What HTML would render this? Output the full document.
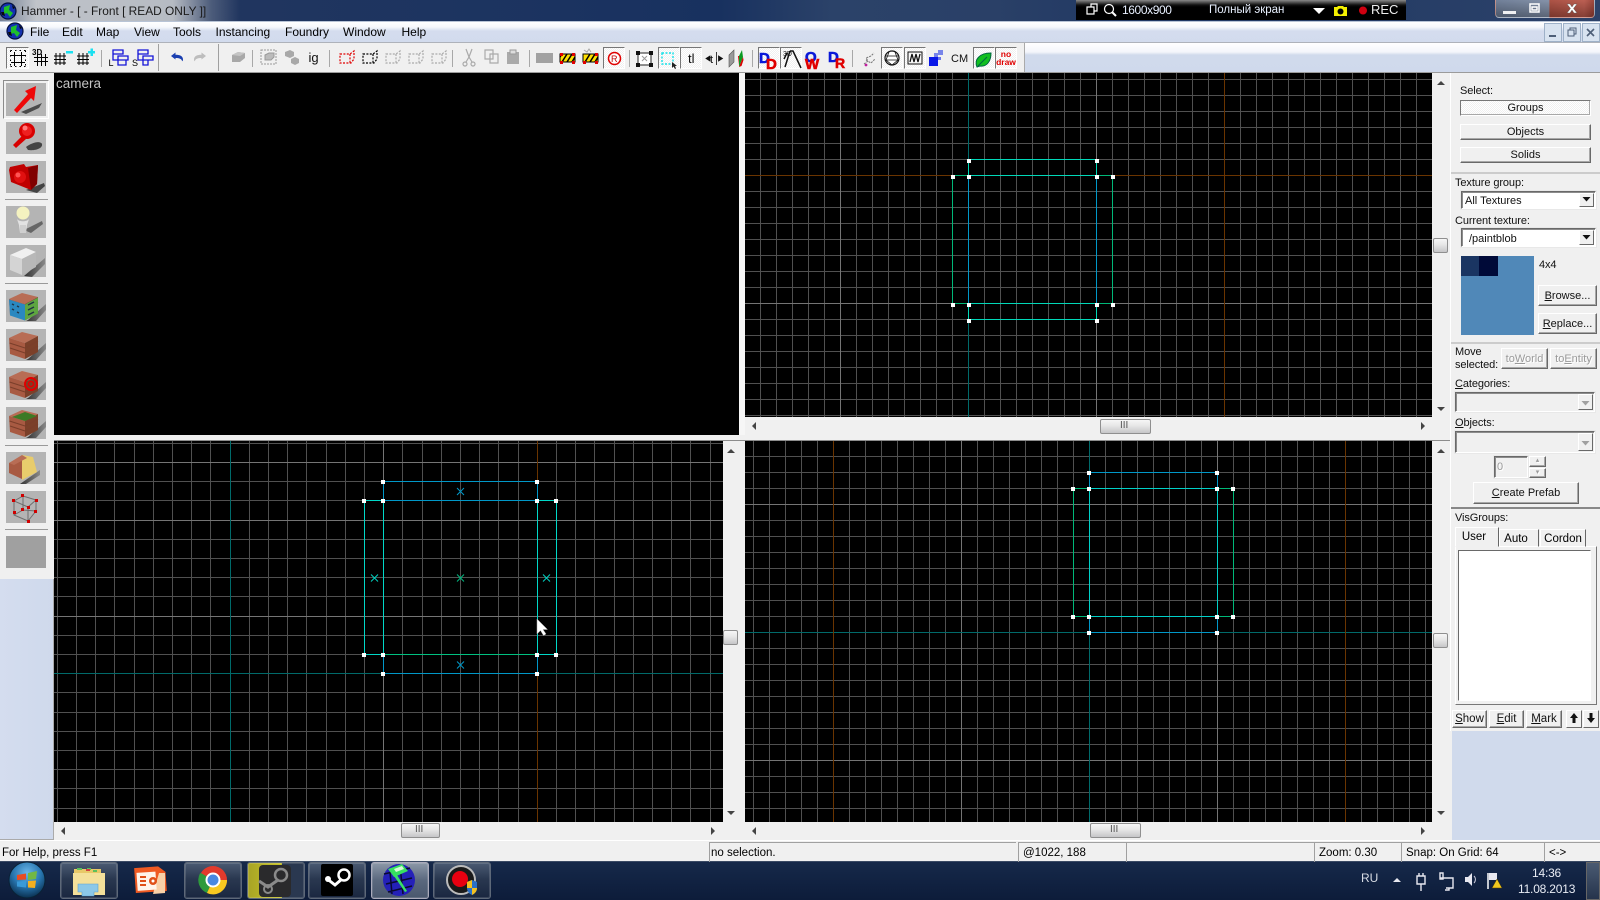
<!DOCTYPE html>
<html><head><meta charset="utf-8"><title>Hammer</title>
<style>
html,body{margin:0;padding:0;width:1600px;height:900px;overflow:hidden;background:#f0f0f0}
body{position:relative;font:12px/14px "Liberation Sans",sans-serif;color:#000}
.a,.t,.b,.s,.th{position:absolute;box-sizing:border-box}
.t{white-space:nowrap}
.p{font-size:11px;letter-spacing:-.1px;color:#111}
.b{background:#f0f0f0;border:1px solid;border-color:#fff #696969 #696969 #fff;box-shadow:inset -1px -1px #a8a8a8;text-align:center;font-size:11px;white-space:nowrap;color:#111}
.s{background:#fff;border:1px solid;border-color:#696969 #fff #fff #696969;box-shadow:inset 1px 1px #8c8c8c,0 0 0 1px #e8e8e8;font-size:11px;color:#111}
.dis{background:#f0f0f0}
.gr{color:#9a9a9a;text-shadow:1px 1px #fff}
.th{background:linear-gradient(#f6f6f6,#e6e6e6 45%,#c6c6c8);border:1px solid #8f8f8f;border-radius:2px}
.pr{background:repeating-conic-gradient(#fff 0 25%,#f0f0f0 0 50%) 0 0/2px 2px;border:1px solid;border-color:#777 #fff #fff #777}
.st{position:absolute;top:842px;height:19px;border-left:1px solid #a0a0a0;border-top:1px solid #a0a0a0;font-size:11.5px;line-height:20px;padding-left:4px;white-space:nowrap}
.tb{position:absolute;top:862px;height:37px;width:58px;box-sizing:border-box;border:1px solid #5d6878;border-radius:3px;background:linear-gradient(#4a5a72,#2a3850 45%,#1a2740);box-shadow:inset 0 0 0 1px rgba(255,255,255,.14)}
</style></head><body>

<!-- title bar -->
<div class="a" style="left:0;top:0;width:1600px;height:21px;background:linear-gradient(90deg,#24375e 0,#1b3360 35%,#18315f 45%,#2b4269 52%,#2a4067 62%,#1f3763 72%,#2c4269 100%)"></div>
<div class="a" style="left:0;top:0;width:240px;height:21px;background:linear-gradient(90deg,rgba(150,158,172,.7),rgba(200,203,207,.95) 15%,rgba(190,194,200,.95) 72%,rgba(120,130,150,.5) 88%,rgba(30,50,90,0))"></div>
<div class="t" style="left:21px;top:4px;color:#1a1a1a;font-size:11.9px">Hammer - [ - Front [ READ ONLY ]]</div>
<div class="a" style="left:1076px;top:0;width:330px;height:20px;background:linear-gradient(#8a8a8a,#111 25%,#000 35%)"></div>
<div class="t" style="left:1122px;top:3px;color:#e8f0ff;font-size:12px;letter-spacing:-.4px">1600x900</div>
<div class="t" style="left:1209px;top:3px;color:#e8f0ff;font-size:11.5px">Полный экран</div>
<div class="t" style="left:1371px;top:3px;color:#eee;font-size:13px">REC</div>
<div class="a" style="left:1495px;top:0;width:100px;height:18px;border:1px solid rgba(255,255,255,.4);border-top:0;border-radius:0 0 4px 4px;background:linear-gradient(rgba(255,255,255,.05),rgba(0,0,0,.28)),linear-gradient(90deg,#6a7a94 0,#7f8da5 54%,#a84a3c 55%,#b8574a 90%,#983f34);box-sizing:border-box"></div>

<!-- menu bar -->
<div class="a" style="left:0;top:22px;width:1600px;height:20px;background:linear-gradient(#fff,#f6f8fc 25%,#d4dcee 45%,#d2dbed)"></div>
<div class="a" style="left:0;top:21px;width:1600px;height:1px;background:#b8c4d6"></div>
<div class="a" style="left:0;top:42px;width:1600px;height:1px;background:#aeb2ba"></div>
<div class="t" style="left:30px;top:25px">File</div>
<div class="t" style="left:62px;top:25px">Edit</div>
<div class="t" style="left:96px;top:25px">Map</div>
<div class="t" style="left:134px;top:25px">View</div>
<div class="t" style="left:173px;top:25px">Tools</div>
<div class="t" style="left:215.5px;top:25px">Instancing</div>
<div class="t" style="left:285px;top:25px">Foundry</div>
<div class="t" style="left:343px;top:25px">Window</div>
<div class="t" style="left:401.5px;top:25px">Help</div>

<!-- toolbar strip -->
<div class="a" style="left:0;top:43px;width:1600px;height:30px;background:linear-gradient(#fff,#f4f6fb 30%,#d0daec 40%,#cfd9ec)"></div>
<div class="a" style="left:0;top:43px;width:1024px;height:30px;background:#f0f0f0;border-right:1px solid #aaa;box-sizing:content-box;"></div>
<div class="a" style="left:0;top:72px;width:1600px;height:1px;background:#9b9b9b"></div>

<!-- pressed toolbar buttons -->
<div class="a pr" style="left:6px;top:47px;width:23px;height:22px"></div>
<div class="a pr" style="left:603px;top:47px;width:22px;height:22px"></div>
<div class="a pr" style="left:658px;top:47px;width:22px;height:22px"></div>
<div class="a pr" style="left:680px;top:47px;width:22px;height:22px"></div>
<div class="a pr" style="left:758px;top:47px;width:22px;height:22px"></div>
<div class="a pr" style="left:780px;top:47px;width:22px;height:22px"></div>
<div class="a pr" style="left:881px;top:47px;width:22px;height:22px"></div>
<div class="a pr" style="left:904px;top:47px;width:22px;height:22px"></div>
<div class="a pr" style="left:973px;top:47px;width:22px;height:22px"></div>
<div class="a pr" style="left:995px;top:47px;width:22px;height:22px"></div>

<!-- left bar -->
<div class="a" style="left:0;top:73px;width:54px;height:506px;background:#f0f0f0"></div>
<div class="a" style="left:0;top:579px;width:54px;height:262px;background:linear-gradient(90deg,#d4ddef,#cfd9ec);border-right:1px solid #aaa;border-bottom:2px solid #aaa;box-sizing:border-box"></div>
<div class="a" style="left:3px;top:80px;width:46px;height:39px;border:1px solid;border-color:#8c8c8c #fff #fff #8c8c8c;box-sizing:border-box"></div>

<!-- right panel backdrop -->
<div class="a" style="left:1450px;top:73px;width:150px;height:658px;background:#f0f0f0;border-left:1px solid #fff"></div>
<div class="a" style="left:1452px;top:731px;width:148px;height:110px;background:#d0daec"></div>

<!-- viewports -->
<div class="a" style="left:54px;top:73px;width:685px;height:362px;background:#000"></div>
<div class="a" style="left:54px;top:440px;width:1396px;height:1px;background:#8c8c8c"></div>

<svg class="a" style="left:0;top:0" width="1600" height="900" viewBox="0 0 1600 900" xmlns="http://www.w3.org/2000/svg">
<defs>
<pattern id="g16a" patternUnits="userSpaceOnUse" x="968" y="175" width="16" height="16"><rect width="1" height="16" fill="#505050"/><rect width="16" height="1" fill="#505050"/></pattern>
<pattern id="g16b" patternUnits="userSpaceOnUse" x="1089" y="472" width="16" height="16"><rect width="1" height="16" fill="#505050"/><rect width="16" height="1" fill="#505050"/></pattern>
<pattern id="g19" patternUnits="userSpaceOnUse" x="76" y="462" width="96" height="96" shape-rendering="crispEdges">
<path d="M0 0h1v96H0zM19 0h1v96h-1zM38 0h1v96h-1zM58 0h1v96h-1zM77 0h1v96h-1zM0 0h96v1H0zM0 19h96v1H0zM0 38h96v1H0zM0 58h96v1H0zM0 77h96v1H0z" fill="#505050"/></pattern>
<linearGradient id="rd" x1="0" y1="0" x2="1" y2="1"><stop offset="0" stop-color="#ff3030"/><stop offset="1" stop-color="#900000"/></linearGradient>
<linearGradient id="sh" x1="0" y1="0" x2="1" y2="0"><stop offset="0" stop-color="#333"/><stop offset="1" stop-color="#888"/></linearGradient>
<g id="cube">
<path d="M22 30 40 14v6L30 31H20z" fill="url(#sh)"/>
<path d="M3 9 16 3l16 4-13 7z" fill="#b86d55"/>
<path d="M3 9l16 5v16L4 25z" fill="#a85a42"/>
<path d="M19 14l13-7v16l-13 7z" fill="#7b4029"/>
<path d="M3.5 14l15.5 5M4 19l15 5M19 19l13-7M19 24l13-7" stroke="#7a3e2a" stroke-width="1" fill="none"/>
</g>
<g id="globe"><circle r="8" fill="#1432b0"/><circle r="8" fill="none" stroke="#041040" stroke-width="1.2"/><path d="M-4-4 2-6 1-1 5 2 2 6-1 2-4 3z" fill="#1fc02a"/><path d="M-7 1-4 1-3 5-6 4zM4-6 7-3 5-2z" fill="#0a0a0a"/></g>
<linearGradient id="tbg" x1="0" y1="0" x2="0" y2="1"><stop offset="0" stop-color="#16294a"/><stop offset="1" stop-color="#0d1c3a"/></linearGradient>
<radialGradient id="orb" cx=".5" cy=".3" r=".7"><stop offset="0" stop-color="#6ab6e8"/><stop offset=".55" stop-color="#2876b0"/><stop offset="1" stop-color="#0a3050"/></radialGradient>
</defs>

<!-- grids -->
<rect x="745" y="73" width="687" height="344" fill="#000"/>
<rect x="745" y="441" width="687" height="381" fill="#000"/>
<rect x="54" y="441" width="669" height="381" fill="#000"/>
<g shape-rendering="crispEdges">
<rect x="745" y="73" width="687" height="344" fill="url(#g16a)"/>
<rect x="745" y="441" width="687" height="381" fill="url(#g16b)"/>
<rect x="54" y="441" width="669" height="381" fill="url(#g19)"/>
<path d="M840.5 73V417M1096.5 73V417M745 303.5H1432" stroke="#747474" fill="none"/>
<path d="M968.5 73V417" stroke="#006a6a" fill="none"/>
<path d="M1224.5 73V417M745 175.5H1432" stroke="#6a3400" fill="none"/>
<path d="M961.5 441V822M1217.5 441V822M745 504.5H1432M745 760.5H1432" stroke="#747474" fill="none"/>
<path d="M1089.5 441V822M745 632.5H1432" stroke="#006a6a" fill="none"/>
<path d="M833.5 441V822M1345.5 441V822" stroke="#6a3400" fill="none"/>
<path d="M383.5 441V822M54 462.5H723M54 520.5H723M54 616.5H723" stroke="#747474" fill="none"/>
<path d="M230.5 441V822M54 673.5H723" stroke="#006a6a" fill="none"/>
<path d="M537.5 441V822" stroke="#6a3400" fill="none"/>

<g fill="none">
<path d="M952.5 175.5V303.5M1112.5 175.5V303.5M952.5 175.5H968.5M1096.5 175.5H1112.5M952.5 303.5H968.5M1096.5 303.5H1112.5" stroke="#00b878"/>
<path d="M968.5 175.5V303.5M1096.5 175.5V303.5" stroke="#0098c8"/>
<path d="M968.5 159.5H1096.5M968.5 175.5H1096.5M968.5 303.5H1096.5M968.5 319.5H1096.5M968.5 159.5V175.5M1096.5 159.5V175.5M968.5 303.5V319.5M1096.5 303.5V319.5" stroke="#00d8b8"/>
</g>
<path fill="#fff" d="M967 159h4v4h-4zM1095 159h4v4h-4zM951 175h4v4h-4zM967 175h4v4h-4zM1095 175h4v4h-4zM1111 175h4v4h-4zM951 303h4v4h-4zM967 303h4v4h-4zM1095 303h4v4h-4zM1111 303h4v4h-4zM967 319h4v4h-4zM1095 319h4v4h-4z"/>

<g fill="none">
<path d="M1073.5 488.5V616.5M1233.5 488.5V616.5M1073.5 488.5H1089.5M1217.5 488.5H1233.5M1073.5 616.5H1089.5M1217.5 616.5H1233.5" stroke="#00b878"/>
<path d="M1089.5 472.5H1217.5M1089.5 632.5H1217.5M1089.5 472.5V488.5M1217.5 472.5V488.5M1089.5 616.5V632.5M1217.5 616.5V632.5" stroke="#0098c8"/>
<path d="M1089.5 488.5H1217.5M1089.5 616.5H1217.5M1089.5 488.5V616.5M1217.5 488.5V616.5" stroke="#00d0c8"/>
</g>
<path fill="#fff" d="M1087 471h4v4h-4zM1215 471h4v4h-4zM1071 487h4v4h-4zM1087 487h4v4h-4zM1215 487h4v4h-4zM1231 487h4v4h-4zM1071 615h4v4h-4zM1087 615h4v4h-4zM1215 615h4v4h-4zM1231 615h4v4h-4zM1087 631h4v4h-4zM1215 631h4v4h-4z"/>

<g fill="none">
<path d="M383.5 481.5H537.5M383.5 500.5H537.5M383.5 673.5H537.5M383.5 481.5V500.5M537.5 481.5V500.5M383.5 654.5V673.5M537.5 654.5V673.5" stroke="#0098c8"/>
<path d="M364.5 500.5V654.5M556.5 500.5V654.5M383.5 500.5V654.5M537.5 500.5V654.5M364.5 500.5H383.5M537.5 500.5H556.5M364.5 654.5H383.5M537.5 654.5H556.5" stroke="#00d8c8"/>
<path d="M383.5 654.5H537.5" stroke="#00c080"/>
</g>
<path fill="#fff" d="M381 480h4v4h-4zM535 480h4v4h-4zM362 499h4v4h-4zM381 499h4v4h-4zM535 499h4v4h-4zM554 499h4v4h-4zM362 653h4v4h-4zM381 653h4v4h-4zM535 653h4v4h-4zM554 653h4v4h-4zM381 672h4v4h-4zM535 672h4v4h-4z"/>
</g>
<g fill="none" stroke-width="1">
<path d="M457 488l7 7m0-7l-7 7M457 661.5l7 7m0-7l-7 7" stroke="#0098c8"/>
<path d="M371 574.5l7 7m0-7l-7 7M543 574.5l7 7m0-7l-7 7" stroke="#00d0c0"/>
<path d="M457 574.5l7 7m0-7l-7 7" stroke="#00b880"/>
</g>
<path d="M537 619v15l3.5-3.5 3 5 2.5-1.5-3-4.5h4.5z" fill="#fff" stroke="#aaa" stroke-width=".5"/>

<!-- scroll arrows -->
<g fill="#444">
<path d="M1437 85l4-4 4 4zM1437 407l4 4 4-4zM1437 453l4-4 4 4zM1437 811l4 4 4-4zM727 453l4-4 4 4zM727 811l4 4 4-4z"/>
<path d="M756 422l-4 4 4 4zM1421 422l4 4-4 4zM756 827l-4 4 4 4zM1421 827l4 4-4 4zM65 827l-4 4 4 4zM711 827l4 4-4 4z"/>
</g>

<path d="M1451 173h149M1451 343h149" stroke="#a8a8a8" fill="none"/>
<path d="M1451 508h149" stroke="#888" stroke-width="2" fill="none"/>

<use href="#globe" transform="translate(8 11)"/>
<use href="#globe" transform="translate(15 31)"/>

<g fill="none" stroke="#fff" stroke-width="1.2">
<path d="M1087 7h7v7h-7zM1091 7V4h6v7h-3"/>
<circle cx="1109" cy="9" r="4.5"/><path d="M1112 12l4 4" stroke-width="2"/>
</g>
<path d="M1313 8h12l-6 6z" fill="#fff"/>
<path d="M1334 7h3l1-1h5l1 1h3v9h-13z" fill="#f4f000"/><circle cx="1340.5" cy="11.5" r="3" fill="#000"/>
<circle cx="1363" cy="10.5" r="4" fill="#d00010"/>
<path d="M1503 11h13v3h-13z" fill="#fff" opacity=".9"/>
<path d="M1530 4h9v8h-9zM1532 7h5v3h-5z" fill="none" stroke="#fff" stroke-width="1.5"/>
<path d="M1567 4l3 0 2 3 2-3 3 0-3.5 4.5 3.5 4.5-3 0-2-3-2 3-3 0 3.5-4.5z" fill="#fff" stroke="#555" stroke-width=".4"/>
<g fill="#d8e3f0" stroke="#9eb1c8"><rect x="1544.5" y="23.5" width="17" height="18"/><rect x="1563.5" y="23.5" width="17" height="18"/><rect x="1582.5" y="23.5" width="17" height="18"/></g>
<g fill="none" stroke="#4e5f78"><path d="M1549 36h7" stroke-width="2"/><path d="M1568 30h6v6h-6zM1570 30v-2h6v6h-2"/><path d="M1587 29l7 7m0-7l-7 7" stroke-width="1.6"/></g>

<g stroke="#a8a8a8" fill="none">
<path d="M101.5 50V67M252.5 50V67M329.5 50V67M452.5 50V67M529.5 50V67M629.5 50V67M752.5 50V67M852.5 50V67"/>
<path d="M158.5 44V71M218.5 44V71" stroke="#a0a0a0"/>
</g>

<!-- toolbar icons -->
<g fill="none" stroke="#000" stroke-width="1">
<path d="M14.5 52V66M21.5 52V66M11 55.5H25M11 62.5H25"/>
<path d="M10.5 50.5v16M25.5 50.5v16M10.5 50.5h15M10.5 66.5h15" stroke-dasharray="1.500 3"/>
<path d="M37.5 54V66M41.500 54V66M45.5 54V66M34 57.5H48M34 61.5H48"/>
<path d="M56 53V65M60 53V65M64 53V65M54 56H66M54 59.5H66M54 63H66"/>
<path d="M79 53V65M83 53V65M87 53V65M77 56H89M77 59.5H89M77 63H89"/>
</g>
<text x="32" y="55" font-family="Liberation Sans" font-weight="bold" font-size="8" fill="#000">3D</text>
<path d="M66 51h7v2.5h-7zM88 51h7v2.5h-7zM90.5 48.5H93V56h-2.5z" fill="#1be0f0"/>
<g fill="none" stroke="#1414d8" stroke-width="1.3">
<path d="M113 50h10v4h-10zM113 54v6h5M118 56h10v4h-10zM118 60v5h8v-5"/>
<path d="M138 50h10v4h-10zM138 54v6h5M143 56h10v4h-10zM143 60h5v5h-5z"/>
</g>
<text x="108.500" y="66" font-family="Liberation Sans" font-size="9" fill="#000">L</text>
<text x="132" y="66" font-family="Liberation Sans" font-size="9" fill="#000">S</text>
<path d="M171 56l4.500-3.500v2.200c4 0 7.500 1 7.500 4.800 0 1-.3 1.500-.8 1.800-.5-2.500-3-3.300-6.700-3.300v1.500z" fill="#1a3fb0"/>
<path d="M206 56l-4.500-3.500v2.200c-4 0-7.500 1-7.500 4.800 0 1 .3 1.500.8 1.800.5-2.500 3-3.300 6.700-3.300v1.500z" fill="#bdbdbd"/>
<path d="M232 55l6-3 7 1v5l-5 4h-8z" fill="#a8a8a8"/><path d="M238 52l7 1-5 3-8-1z" fill="#c4c4c4"/>
<g stroke="#9a9a9a" fill="#bbb">
<path d="M261 50h15v14h-15z" fill="none" stroke-dasharray="2 1"/><path d="M265 55l4-2h5v4l-3 3h-6z"/>
<path d="M285 52l5-2 4 2v4l-4 2-5-2zM291 59l4-2 4 2v4l-4 2-4-2z" stroke="none" fill="#a8a8a8"/>
</g>
<text x="308.5" y="62" font-family="Liberation Sans" font-size="13" fill="#111">ig</text>
<g fill="none" stroke-dasharray="2 1.4" stroke-width="1.2">
<path d="M340 54h10l4-3v8l-3 4h-11zM350 54v9" stroke="#e00000"/>
<path d="M363 54h10l4-3v8l-3 4h-11zM373 54v9" stroke="#000"/>
<path d="M386 54h10l4-3v8l-3 4h-11zM396 54v9" stroke="#aaa"/>
<path d="M409 54h10l4-3v8l-3 4h-11zM419 54v9" stroke="#aaa"/>
<path d="M432 54h10l4-3v8l-3 4h-11zM442 54v9" stroke="#aaa"/>
</g>
<g fill="none" stroke="#aaa" stroke-width="1.2">
<path d="M466 49l3 8 3-8M469 57l-3 5M469 57l3 5"/><circle cx="465" cy="64" r="2"/><circle cx="473" cy="64" r="2"/>
<path d="M485 50h8v9h-8zM490 54h8v9h-8z"/>
</g>
<path d="M507 52h12v12h-12z" fill="#aaa"/><path d="M510 50h6v4h-6z" fill="#ddd" stroke="#999"/>
<rect x="536" y="53" width="17" height="10" fill="#a2a2a2"/>
<g>
<rect x="560" y="54" width="15" height="8" fill="#ffe000" stroke="#000"/><path d="M562 54l-2 3M567 54l-5 8M572 54l-5 8M575 57l-3 5" stroke="#000" stroke-width="1.5"/>
<path d="M560 53h3v3h-3zM572 53h3v3h-3zM560 61h3v3h-3zM572 61h3v3h-3z" fill="#e00000"/>
<rect x="583" y="54" width="15" height="8" fill="#ffe000" stroke="#000"/><path d="M590 54l-5 8M595 54l-5 8M598 57l-3 5" stroke="#000" stroke-width="1.5"/>
<path d="M583 61h3v3h-3zM595 61h3v3h-3zM595 53h3v3h-3z" fill="#e00000"/><path d="M584 50l3 2 2-3 2 3" stroke="#aaa" fill="none"/>
</g>
<circle cx="614.5" cy="58.500" r="6" fill="#fff" stroke="#e00000" stroke-width="1.500"/>
<text x="611" y="62" font-family="Liberation Sans" font-size="9" fill="#c00000">R</text>
<path d="M638 53h13v12h-13z" fill="#fff" stroke="#222"/><path d="M636 51h4v4h-4zM649 51h4v4h-4zM636 63h4v4h-4zM649 63h4v4h-4z" fill="#111"/><path d="M642 56l5 5m0-5l-5 5" stroke="#999" fill="none"/>
<path d="M662 53h11v11h-11z" fill="none" stroke="#12e0e8" stroke-width="1.4" stroke-dasharray="2 1.500"/><path d="M672 62v6l1.500-1.500 1.500 2.500 1-.5-1-2.500h2z" fill="#222"/>
<text x="688" y="63" font-family="Liberation Sans" font-size="13" fill="#111">tl</text>
<text x="710" y="63" font-family="Liberation Sans" font-size="11" fill="#111">t</text>
<path d="M706 58.500l4-2.500v5zM716.500 52v13M722.500 58.500l-4-2.500v5z" stroke="#111" fill="#111" stroke-width=".8"/>
<path d="M729 55l5-5v12l-5 5z" fill="#9a9a9a" stroke="#555" stroke-width=".6"/>
<path d="M739 56l3-6 1 7-4 10z" fill="#0a9a20"/><path d="M739 67l4-10 .5 3-2 6zM738 56l1 0 0 9z" fill="#d80000"/>
<g font-family="Liberation Sans" font-weight="bold" stroke-width=".6">
<text x="759" y="63" font-size="15" fill="#0a18d8" stroke="#0a18d8">D</text>
<text x="766" y="69" font-size="15" fill="#e00000" stroke="#e00000">D</text>
<path d="M787 53l-3 6M790 51h3l8 17M790 51l-5 16" fill="none" stroke="#111" stroke-width="1.500"/>
<text x="783" y="56" font-size="7" font-weight="normal" fill="#111">3D</text>
<text x="805" y="62" font-size="15" fill="#0a18d8" stroke="#0a18d8">O</text>
<text x="805" y="69" font-size="15" fill="#e00000" stroke="#e00000">W</text>
<text x="828" y="62" font-size="15" fill="#0a18d8" stroke="#0a18d8">D</text>
<text x="835" y="68" font-size="14" fill="#e00000" stroke="#e00000">R</text>
</g>
<path d="M864 64l4-3-2-3 5-2 3-3M866 60l5 3 4-4" fill="none" stroke="#777" stroke-dasharray="2 1"/><circle cx="866" cy="65" r="1.4" fill="#c020a0"/>
<circle cx="892" cy="58" r="7" fill="#fff" stroke="#111" stroke-width="1.2"/><path d="M886 56h12M885 60h14M889 52l-3 8 6 5 6-5-3-8" fill="none" stroke="#111" stroke-width=".8"/>
<rect x="908" y="52" width="14" height="12" fill="#f8f8f8" stroke="#111"/><path d="M910 62l2-8 2 8 2-8 2 8 2-8" fill="none" stroke="#111" stroke-width="1.3"/>
<rect x="929" y="57" width="9" height="9" fill="#0a18e8"/><path d="M934 53h4v4h-4zM938 50h5v5h-5z" fill="#5a6ae8" opacity=".8"/><rect x="938" y="57" width="3" height="3" fill="#6a76e8"/>
<text x="951" y="62" font-family="Liberation Sans" font-size="11" fill="#111">CM</text>
<path d="M977 67c-3-7 2-14 14-14 0 8-4 14-11 13z" fill="#12c020" stroke="#064" stroke-width="1"/><path d="M978 66l9-9" stroke="#064" fill="none"/>
<text x="1006" y="57" text-anchor="middle" font-family="Liberation Sans" font-size="8.5" font-weight="bold" fill="#e00000">no</text>
<text x="1006" y="65" text-anchor="middle" font-family="Liberation Sans" font-size="8.5" font-weight="bold" fill="#e00000">draw</text>

<!-- left toolbar -->
<g fill="#b4b4b4">
<rect x="6" y="83" width="40" height="33"/><rect x="6" y="122" width="40" height="32"/><rect x="6" y="161" width="40" height="32"/>
<rect x="6" y="206" width="40" height="32"/><rect x="6" y="245" width="40" height="32"/>
<rect x="6" y="290" width="40" height="32"/><rect x="6" y="329" width="40" height="32"/><rect x="6" y="368" width="40" height="32"/><rect x="6" y="407" width="40" height="32"/>
<rect x="6" y="452" width="40" height="32"/><rect x="6" y="491" width="40" height="32"/>
<rect x="6" y="536" width="40" height="32" fill="#a0a0a0"/>
</g>
<path d="M5 199.5h43M5 283.500h43M5 445.500h43M5 529.500h43" stroke="#9a9a9a" fill="none"/>
<!-- arrow -->
<path d="M21 112l21-9-3 5-13 6z" fill="#4a4a4a"/>
<path d="M14 110l3 3 14-15 3 3 2-15-11 5 3 3z" fill="#ee0808"/>
<!-- magnifier -->
<path d="M26 147c5-4 14-7 16-3 1 4-6 7-14 6z" fill="#444"/>
<path d="M22 136l-9 9 3 3 10-9z" fill="#d80000"/><circle cx="27" cy="131" r="8" fill="#d80000"/><circle cx="27" cy="131" r="5" fill="#ee2020"/><circle cx="25" cy="128" r="2.5" fill="#ff7a7a"/>
<!-- camera -->
<path d="M26 190l18-7 1 3-8 7z" fill="#444"/>
<path d="M10 167l14-3 2 3 12-2-1 19-6 6-20-8-2-12z" fill="#c00000"/><path d="M28 168l10-3-1 19-6 6z" fill="#800000"/><circle cx="20" cy="177" r="6" fill="#e01010"/><circle cx="18" cy="175" r="2.5" fill="#ff5555"/>
<!-- entity -->
<path d="M24 230l18-9 1 3-12 9z" fill="#666"/>
<circle cx="23" cy="213" r="6.5" fill="#f4f2c0"/><path d="M17 219c2 3 10 3 12 0l-2 6-1 8-6 0-1-8z" fill="#e2e2e2"/><path d="M20 225h6v8h-6z" fill="#cfcfcf"/>
<!-- white cube -->
<path d="M24 276 45 258v6L32 277z" fill="url(#sh)"/>
<path d="M10 255l16-7 10 4-14 7z" fill="#f0f0f0"/><path d="M10 255l12 4v16l-12-5z" fill="#d4d4d4"/><path d="M22 259l14-7v15l-14 8z" fill="#b8b8b8"/>
<!-- textured cubes -->
<use href="#cube" transform="translate(6 290)"/>
<path d="M9 299.5l16 5v16l-15-5z" fill="#2a88c0"/><path d="M25 304.5l13-7v16l-13 7z" fill="#5ea640"/>
<path d="M12 304l2 1M17 306l2 1M12 309l2 1M17 312l2 1M28 305l6-3M28 310l6-3M28 315l6-3" stroke="#234" stroke-width="1.500"/>
<use href="#cube" transform="translate(6 329)"/>
<use href="#cube" transform="translate(6 368)"/>
<circle cx="31" cy="384" r="6" fill="none" stroke="#e00000" stroke-width="2"/><circle cx="31" cy="384" r="2.5" fill="none" stroke="#e00000" stroke-width="1.6"/>
<use href="#cube" transform="translate(6 407)"/>
<path d="M12 417l13-5 12 4-12 5z" fill="#3d7a25"/>
<!-- texture apply -->
<path d="M20 484l20-14v5l-14 9z" fill="url(#sh)"/>
<path d="M9 463l13-6v22l-13-6z" fill="#a85a42"/>
<path d="M22 455l11 2 4 15-15 8z" fill="#e8cc6c"/><path d="M9 463l13-8 5 3-13 7z" fill="#b86d55"/>
<!-- vertex -->
<g stroke="#6e6e6e" fill="none">
<path d="M14 501l9-5 13 4-8 7zM14 501v14l14 6v-14M36 500v11l-8 10M14 515l9-5 13 1M23 496v14"/>
</g>
<path d="M21 494h3v3h-3zM12 499h3v3h-3zM35 499h3v3h-3zM27 506h3v3h-3zM21 508h3v3h-3zM13 511h3v3h-3zM34 510h3v3h-3zM27 520h3v3h-3z" fill="#d00000"/>

<rect x="0" y="861" width="1600" height="39" fill="url(#tbg)"/>
<rect x="0" y="861" width="1600" height="1" fill="#3a4a64"/>
</svg>

<!-- scroll thumbs -->
<div class="a" style="left:739px;top:73px;width:6px;height:362px;background:#f6f6f6"></div>
<div class="th" style="left:1100px;top:419px;width:51px;height:15px"></div>
<div class="th" style="left:401px;top:823px;width:39px;height:15px"></div>
<div class="th" style="left:1090px;top:823px;width:51px;height:15px"></div>
<div class="th" style="left:1433px;top:238px;width:15px;height:15px"></div>
<div class="th" style="left:1433px;top:633px;width:15px;height:15px"></div>
<div class="th" style="left:723px;top:630px;width:15px;height:15px"></div>
<div class="t" style="left:1120px;top:419px;font-size:10px;color:#555">III</div>
<div class="t" style="left:415px;top:823px;font-size:10px;color:#555">III</div>
<div class="t" style="left:1110px;top:823px;font-size:10px;color:#555">III</div>

<div class="t" style="left:56px;top:77px;color:#c4c4c4;font-size:13.5px">camera</div>

<!-- panel controls -->
<div class="t p" style="left:1460px;top:84px">Select:</div>
<div class="b pr" style="left:1460px;top:100px;width:131px;height:16px;line-height:15px">Groups</div>
<div class="b" style="left:1460px;top:124px;width:131px;height:16px;line-height:15px">Objects</div>
<div class="b" style="left:1460px;top:147px;width:131px;height:16px;line-height:15px">Solids</div>
<div class="t p" style="left:1455px;top:176px">Texture group:</div>
<div class="s" style="left:1461px;top:191px;width:135px;height:18px;line-height:19px;padding-left:3px">All Textures</div>
<div class="b" style="left:1579px;top:193px;width:15px;height:14px;box-shadow:none"></div>
<div class="t p" style="left:1455px;top:214px">Current texture:</div>
<div class="s" style="left:1461px;top:228px;width:135px;height:19px;line-height:20px;padding-left:7px">/paintblob</div>
<div class="b" style="left:1579px;top:230px;width:15px;height:15px;box-shadow:none"></div>
<div class="a" style="left:1461px;top:256px;width:73px;height:79px;background:#5088b8"></div>
<div class="a" style="left:1461px;top:256px;width:18px;height:20px;background:#1a3562"></div>
<div class="a" style="left:1479px;top:256px;width:19px;height:20px;background:#000a38"></div>
<div class="t p" style="left:1539px;top:258px">4x4</div>
<div class="b" style="left:1538px;top:285px;width:59px;height:21px;line-height:20px"><u>B</u>rowse...</div>
<div class="b" style="left:1538px;top:313px;width:59px;height:21px;line-height:20px"><u>R</u>eplace...</div>
<div class="t p" style="left:1455px;top:346px;line-height:13px">Move<br>selected:</div>
<div class="b gr" style="left:1501px;top:348px;width:47px;height:21px;line-height:20px">to<u>W</u>orld</div>
<div class="b gr" style="left:1550px;top:348px;width:47px;height:21px;line-height:20px">to<u>E</u>ntity</div>
<div class="t p" style="left:1455px;top:377px"><u>C</u>ategories:</div>
<div class="s dis" style="left:1455px;top:392px;width:140px;height:20px"></div>
<div class="b" style="left:1578px;top:394px;width:15px;height:16px;box-shadow:none"></div>
<div class="t p" style="left:1455px;top:416px"><u>O</u>bjects:</div>
<div class="s dis" style="left:1455px;top:431px;width:140px;height:22px"></div>
<div class="b" style="left:1578px;top:433px;width:15px;height:18px;box-shadow:none"></div>
<div class="s dis gr" style="left:1494px;top:456px;width:34px;height:22px;line-height:21px;padding-left:2px">0</div>
<div class="b gr" style="left:1529px;top:456px;width:17px;height:11px;font-size:7px;line-height:8px">▴</div>
<div class="b gr" style="left:1529px;top:468px;width:17px;height:10px;font-size:7px;line-height:7px">▾</div>
<div class="b" style="left:1473px;top:482px;width:106px;height:22px;line-height:21px;font-size:11px"><u>C</u>reate Prefab</div>
<div class="t p" style="left:1455px;top:511px">VisGroups:</div>
<div class="a" style="left:1455px;top:546px;width:142px;height:159px;border:1px solid;border-color:#fff #777 #777 #fff;box-sizing:border-box"></div>
<div class="a" style="left:1455px;top:527px;width:44px;height:20px;background:#f0f0f0;border:1px solid;border-color:#fff #666 transparent #fff;box-sizing:border-box;text-align:center;font-size:11.5px;line-height:19px;padding-right:6px">User</div>
<div class="a" style="left:1499px;top:529px;width:40px;height:18px;border:1px solid;border-color:#fff #666 #fff #fff;box-sizing:border-box;text-align:center;font-size:11.5px;line-height:19px;padding-right:6px">Auto</div>
<div class="a" style="left:1540px;top:529px;width:46px;height:18px;border:1px solid;border-color:#fff #666 #fff #fff;box-sizing:border-box;text-align:center;font-size:11.5px;line-height:19px">Cordon</div>
<div class="s" style="left:1458px;top:550px;width:133px;height:151px;box-shadow:none"></div>
<div class="b" style="left:1452px;top:710px;width:35px;height:18px;line-height:17px;font-size:11.5px"><u>S</u>how</div>
<div class="b" style="left:1489px;top:710px;width:35px;height:18px;line-height:17px;font-size:11.5px"><u>E</u>dit</div>
<div class="b" style="left:1526px;top:710px;width:36px;height:18px;line-height:17px;font-size:11.5px"><u>M</u>ark</div>
<div class="b" style="left:1566px;top:710px;width:16px;height:18px;box-shadow:none"></div>
<div class="b" style="left:1583px;top:710px;width:16px;height:18px;box-shadow:none"></div>

<svg class="a" style="left:0;top:0" width="1600" height="900" viewBox="0 0 1600 900">
<g fill="#111"><path d="M1582.500 197h8l-4 4.500zM1582.500 235h8l-4 4.500z"/></g>
<g fill="#a0a0a0"><path d="M1581.500 401h8l-4 4.500zM1581.500 441h8l-4 4.500z"/></g>
<path d="M1574 713l-4 5h2.500v5h3v-5h2.500zM1591 723l-4-5h2.500v-5h3v5h2.500z" fill="#111"/>
</svg>

<!-- status bar -->
<div class="a" style="left:0;top:840px;width:1600px;height:21px;background:#f0f0f0;border-top:1px solid #fff;box-sizing:border-box"></div>
<div class="t" style="left:2px;top:846px;font-size:11.5px">For Help, press F1</div>
<div class="st" style="left:709px;width:305px;padding-left:1px">no selection.</div>
<div class="st" style="left:1018px;width:105px">@1022, 188</div>
<div class="st" style="left:1126px;width:184px"></div>
<div class="st" style="left:1314px;width:84px">Zoom: 0.30</div>
<div class="st" style="left:1401px;width:140px">Snap: On Grid: 64</div>
<div class="st" style="left:1544px;width:56px">&lt;-&gt;</div>

<!-- taskbar -->
<div class="tb" style="left:60px"></div>
<div class="tb" style="left:184px"></div>
<div class="tb" style="left:247px;background:linear-gradient(90deg,#a8a426 0,#c8c428 60%,#2a3850 61%)"></div>
<div class="tb" style="left:308px"></div>
<div class="tb" style="left:371px;background:linear-gradient(#8c98a8,#5a687e 50%,#4a586e);border-color:#aab"></div>
<div class="tb" style="left:433px"></div>
<div class="a" style="left:1586px;top:862px;width:14px;height:38px;background:linear-gradient(#4a5a72,#26344c);border:1px solid #666;box-sizing:border-box"></div>

<svg class="a" style="left:0;top:861px" width="1600" height="39" viewBox="0 861 1600 39">
<circle cx="27" cy="880" r="18" fill="url(#orb)" stroke="#0a2236"/>
<path d="M17 875l9-1.500v6l-9 .5z" fill="#e84b22"/>
<path d="M28 873l9-2-1 8-8 1z" fill="#72b844"/>
<path d="M17 881.500l9-.5v6.500l-9-1z" fill="#3a9ad8"/>
<path d="M28 881l8-.5-1 7.500-7-.5z" fill="#f4b020"/>
<path d="M74 869h27v5H74z" fill="#e8c868"/>
<path d="M77 868h5v2h-5zM87 868h4v2h-4zM93 870h4v2h-4z" fill="#5cc05c"/>
<path d="M86 869h4v2h-4z" fill="#d04040"/>
<path d="M73 873h32v22H73z" fill="#f4e09a"/>
<path d="M78 884h20v8H94v4H82v-4h-4z" fill="#8cc8e8" stroke="#5aa0d0" stroke-width=".6"/>
<path d="M135 867h24l7 6v19l-7 1v-1h-24z" fill="#f05a22" transform="rotate(-4 150 880)"/>
<path d="M159 873h6v20l-12 1z" fill="#f8d0a8"/>
<path d="M137 872h19v18h-19z" fill="#fff4ea" transform="rotate(-4 150 880)"/>
<path d="M140 877h6M140 881h6M140 885h6" stroke="#e05018" stroke-width="2"/>
<circle cx="153" cy="881" r="4" fill="#e05018"/><circle cx="153" cy="881" r="1.500" fill="#fff"/>
<circle cx="213" cy="880" r="14" fill="#e23a2c"/>
<path d="M213 880l-12.100-7-1 .5A14 14 0 0 0 207 893z" fill="#2e9a3c"/>
<path d="M213 880l-6 13A14 14 0 0 0 227 880z" fill="#f8c820"/>
<circle cx="213" cy="880" r="6.500" fill="#4a88e0" stroke="#fff" stroke-width="2"/>
<rect x="259" y="865" width="32" height="32" rx="4" fill="#2a2a2c"/>
<circle cx="281" cy="875" r="6" fill="none" stroke="#8a8a8a" stroke-width="2.500"/>
<circle cx="268" cy="889" r="4" fill="none" stroke="#8a8a8a" stroke-width="2"/>
<path d="M259 881l9 6 10-7" stroke="#8a8a8a" stroke-width="3" fill="none"/>
<rect x="321" y="864" width="32" height="32" rx="2" fill="#000"/>
<circle cx="344" cy="875" r="5.500" fill="none" stroke="#fff" stroke-width="2.500"/>
<circle cx="328" cy="879" r="3" fill="#fff"/>
<path d="M326 878l9 7 7-6" stroke="#fff" stroke-width="3" fill="none"/>
<circle cx="399" cy="880" r="16" fill="#2420b8"/>
<path d="M384 874l26-6M386 884l26-6M388 892l24-6M390 872l2 22M400 866l3 28" stroke="#0a0a30" fill="none" stroke-width="1.500"/>
<path d="M388 869l14-5 6 7-14 6z" fill="#36e060"/>
<path d="M394 876l11 16 2-1-10-16z" fill="#38e068"/>
<path d="M394 869l8-3 2 3-8 3z" fill="#d8f8d8"/>
<circle cx="461" cy="880" r="14" fill="#1a1a1a" stroke="#bbb" stroke-width="2"/>
<circle cx="460" cy="879" r="8" fill="#e80010"/>
<path d="M467 882l5-2 5 2v6c0 4-3 6-5 7-2-1-5-3-5-7z" fill="#2a70c8"/>
<path d="M467 882l5-2v8h-5zM472 888h5c0 4-3 6-5 7z" fill="#f4c020"/>
<path d="M1393 882l4-4 4 4z" fill="#e8e8f0"/>
<g fill="none" stroke="#e8e8f0" stroke-width="1.400">
<path d="M1417 876h8v8h-8zM1419 873v3M1423 873v3M1421 884v7"/>
<path d="M1440 873h3v6h-3zM1440 878h13v10h-7M1449 888v2h-4"/>
</g>
<path d="M1465 877h3l4-4v13l-4-4h-3z" fill="#e8e8f0"/><path d="M1474 876a5 5 0 0 1 0 7" stroke="#c8c8d8" fill="none"/>
<path d="M1488 873v16" stroke="#fff" stroke-width="1.500"/><path d="M1489 873h8v7h-8z" fill="#e8e8f0"/>
<path d="M1497 879l5 9h-10z" fill="#f0c820" stroke="#503a00" stroke-width=".5"/>
</svg>
<div class="t" style="left:1361px;top:871px;color:#d8dce4;font-size:12px">RU</div>
<div class="t" style="left:1532px;top:866px;color:#e8ecf4;font-size:12px;letter-spacing:-.2px">14:36</div>
<div class="t" style="left:1518px;top:882px;color:#e8ecf4;font-size:12px;letter-spacing:-.2px">11.08.2013</div>
</body></html>
